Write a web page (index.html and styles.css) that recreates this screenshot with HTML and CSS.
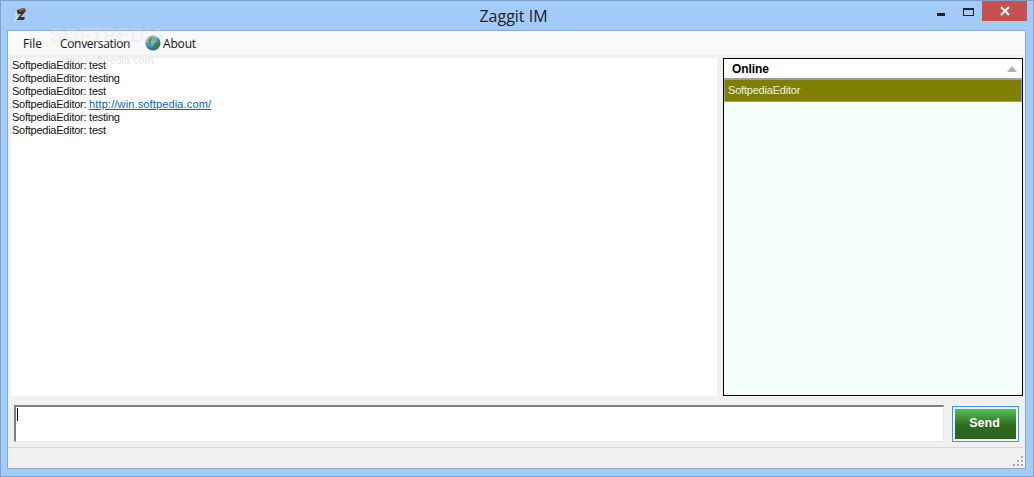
FILE: index.html
```html
<html>
<head>
<title>Zaggit IM</title>
<link rel="stylesheet" href="styles.css">
</head>
<body>
<div class="window">
  <div class="titlebar">
    <svg class="appicon" width="16" height="18" viewBox="0 0 16 18">
      <path d="M1 15 L5 9 L6.500 10 L2.500 15.500 Z" fill="#d5dee8"/>
      <path d="M3 6 L6.500 5 L3.500 10.500 Z" fill="#f2e48a"/>
      <path d="M5 3 L12 1 L14 3 L13 5 L8.500 10 L13 10 L12 13 L4.500 13 L9 7 L5.500 7 Z" fill="#3d3330"/>
      <path d="M6 2.500 L12 1 L13.500 3 L7.500 4.500 Z" fill="#8f5f3a"/>
    </svg>
    <span class="title">Zaggit IM</span>
    <div class="controls">
      <span class="btn-min"></span>
      <span class="btn-max"></span>
      <span class="btn-close">
        <svg width="10" height="10" viewBox="0 0 10 10"><path d="M1 1 L9 9 M9 1 L1 9" stroke="#fff" stroke-width="2"/></svg>
      </span>
    </div>
  </div>

  <div class="client">
    <div class="menu">
      <span class="menu-item file">File</span>
      <span class="menu-item conv">Conversation</span>
      <svg class="globe" width="16" height="16" viewBox="0 0 16 16">
        <defs>
          <radialGradient id="sea" cx="0.4" cy="0.3" r="0.8">
            <stop offset="0" stop-color="#a9d6ee"/>
            <stop offset="0.6" stop-color="#3f86b4"/>
            <stop offset="1" stop-color="#1c4f77"/>
          </radialGradient>
        </defs>
        <circle cx="8" cy="8" r="7.500" fill="url(#sea)"/>
        <path d="M3 5 L7 2 L10 3 L9 6 L6 7 L6 10 L4 9 Z" fill="#5d8a3c"/>
        <path d="M10 8 L14 7 L14 11 L11 14 L9 11 Z" fill="#4f7f34"/>
      </svg>
      <span class="menu-item about">About</span>
    </div>

    <div class="main">
      <div class="chat">
        <div>SoftpediaEditor: test</div>
        <div>SoftpediaEditor: testing</div>
        <div>SoftpediaEditor: test</div>
        <div>SoftpediaEditor: <a href="#">http://win.softpedia.com/</a></div>
        <div>SoftpediaEditor: testing</div>
        <div>SoftpediaEditor: test</div>
      </div>
      <div class="users">
        <div class="users-head">
          <span>Online</span>
          <span class="sort"></span>
        </div>
        <div class="user-row">SoftpediaEditor</div>
      </div>
    </div>

    <div class="compose">
      <div class="input"><span class="caret"></span></div>
      <div class="send"><div class="send-inner">Send</div></div>
    </div>

    <div class="status">
      <svg class="grip" width="11" height="11" viewBox="0 0 11 11" fill="#a9a9a9">
        <rect x="8" y="0" width="2" height="2"/>
        <rect x="4" y="4" width="2" height="2"/><rect x="8" y="4" width="2" height="2"/>
        <rect x="0" y="8" width="2" height="2"/><rect x="4" y="8" width="2" height="2"/><rect x="8" y="8" width="2" height="2"/>
      </svg>
    </div>
  </div>

  <span class="mark-big">SOFTPEDIA</span>
  <span class="mark-small">www.softpedia.com</span>
</div>
</body>
</html>
```

FILE: styles.css
```css
html, body {
  margin: 0;
  padding: 0;
  overflow: hidden;
}
body {
  font-family: 'Liberation Sans', Arial, sans-serif;
  font-size: 11px;
  color: #111;
}
.window {
  position: relative;
  box-sizing: border-box;
  width: 1034px;
  height: 477px;
  display: flex;
  flex-direction: column;
  background: #a3cbf7;
  border: 1px solid #7f9fc8;
  padding: 0 7px 7px 6px;
}

/* title bar */
.titlebar {
  height: 29px;
  flex: none;
  display: flex;
  align-items: flex-start;
  position: relative;
}
.appicon {
  margin: 6px 0 0 5px;
}
.title {
  position: absolute;
  left: 0;
  right: 6px;
  top: 5px;
  text-align: center;
  font-family: 'Open Sans', sans-serif;
  font-size: 16px;
  line-height: 20px;
  color: #222;
}
.controls {
  margin-left: auto;
  display: flex;
  align-items: flex-start;
  margin-right: -1px;
}
.btn-min {
  width: 8px;
  height: 3px;
  background: #222;
  margin: 12px 18px 0 0;
}
.btn-max {
  box-sizing: border-box;
  width: 11px;
  height: 8px;
  border: 1px solid #222;
  border-top-width: 2px;
  margin: 7px 8px 0 0;
}
.btn-close {
  width: 45px;
  height: 20px;
  background: #c75050;
  display: flex;
  align-items: center;
  justify-content: center;
}

/* client area */
.client {
  flex: 1;
  display: flex;
  flex-direction: column;
  background: #f0f0f0;
  border: 1px solid #8fa9cc;
}
.menu {
  height: 24px;
  flex: none;
  display: flex;
  align-items: center;
  background: #f9f9f9;
  font-family: 'Open Sans', sans-serif;
  font-size: 12px;
  color: #111;
}
.file { margin-left: 15px; }
.conv { margin-left: 18px; letter-spacing: -0.33px; }
.globe { margin-left: 15px; }
.about { margin-left: 2px; letter-spacing: -0.2px; }

.main {
  flex: none;
  height: 338px;
  margin-top: 3px;
  display: flex;
  padding: 0 2px 0 3px;
}
.chat {
  width: 706px;
  background: #fff;
  line-height: 13px;
  letter-spacing: -0.25px;
  padding: 1px 0 0 1px;
  box-sizing: border-box;
}
.chat a {
  color: #0066cc;
  letter-spacing: 0.14px;
}
.users {
  box-sizing: border-box;
  width: 300px;
  margin-left: 6px;
  border: 1px solid #000;
  background: #f5fffa;
}
.users-head {
  height: 19px;
  background: #fff;
  border-bottom: 1px solid #a0a0a0;
  display: flex;
  align-items: center;
  justify-content: space-between;
  padding: 0 5px 0 8px;
  font-weight: bold;
  font-size: 12px;
  letter-spacing: -0.1px;
  color: #000;
}
.sort {
  width: 0;
  height: 0;
  border-left: 5px solid transparent;
  border-right: 5px solid transparent;
  border-bottom: 6px solid #b0b0b0;
}
.user-row {
  box-sizing: border-box;
  height: 23px;
  line-height: 21px;
  background: #808000;
  border: 1px solid #a0a08a;
  color: #f0f0e0;
  padding-left: 3px;
  letter-spacing: -0.2px;
}

/* bottom */
.compose {
  flex: none;
  display: flex;
  height: 37px;
  margin-top: 9px;
  padding-left: 6px;
}
.input {
  box-sizing: border-box;
  width: 930px;
  height: 37px;
  background: #fff;
  border-top: 2px solid #808080;
  border-left: 2px solid #808080;
  border-right: 1px solid #e6e6e6;
  border-bottom: 1px solid #e6e6e6;
  padding: 1px 0 0 1px;
}
.caret {
  display: block;
  width: 1px;
  height: 13px;
  background: #000;
}
.send {
  box-sizing: border-box;
  width: 67px;
  height: 36px;
  margin: 1px 0 0 8px;
  border: 1px solid #3399ff;
  padding: 2px;
  background: #f0f0f0;
}
.send-inner {
  height: 100%;
  background: linear-gradient(#55c055, #2f6b22 55%, #2b6420);
  color: #fff;
  font-weight: bold;
  font-size: 12.5px;
  text-align: center;
  line-height: 28px;
  padding-right: 2px;
  box-sizing: border-box;
}
.status {
  flex: 1;
  margin-top: 5px;
  border-top: 1px solid #d7d7d7;
  display: flex;
  justify-content: flex-end;
  align-items: flex-end;
}
.grip {
  margin: 0 1px 1px 0;
}

/* watermark sits over the window */
.mark-big {
  position: absolute;
  left: 49px;
  top: 23px;
  font-size: 20px;
  font-weight: bold;
  color: rgba(225, 225, 225, 0.35);
}
.mark-small {
  position: absolute;
  left: 58px;
  top: 53px;
  font-size: 11px;
  color: rgba(170, 170, 170, 0.35);
}
```
